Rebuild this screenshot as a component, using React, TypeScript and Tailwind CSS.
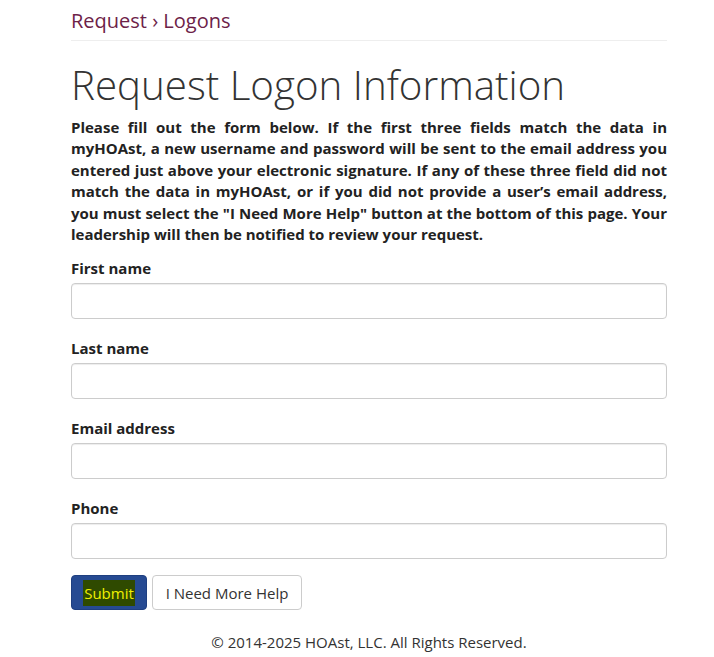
import React from 'react';

const fields = ['First name', 'Last name', 'Email address', 'Phone'];

const App = () => {
  return (
    <div className="min-h-[657px] bg-white text-[#333] font-['Open_Sans',sans-serif]">
      <div className="ml-[71px] w-[596px] pt-[8px]">
        <div className="text-[20px] leading-[26px] text-[#6d2248] pb-[6px] border-b border-[#eee]">
          Request › Logons
        </div>

        <h1 className="mt-[20px] text-[40.3px] leading-[48px] font-light text-[#333]">
          Request Logon Information
        </h1>

        <p className="mt-[8px] text-[15px] leading-[21.4px] font-bold text-[#222] text-justify">
          Please fill out the form below. If the first three fields match the data in myHOAst, a new username and
          password will be sent to the email address you entered just above your electronic signature. If any of
          these three field did not match the data in myHOAst, or if you did not provide a user’s email address, you
          must select the "I Need More Help" button at the bottom of this page. Your leadership will then be notified
          to review your request.
        </p>

        <form className="mt-[13px]" onSubmit={(e) => e.preventDefault()}>
          {fields.map((f) => (
            <div key={f} className="mb-[19px]">
              <label className="block text-[15px] leading-[21px] font-bold text-[#222] mb-[4px]">{f}</label>
              <input
                type="text"
                className="block w-full h-[36px] px-3 border border-[#ccc] rounded-[4px] shadow-[inset_0_1px_1px_rgba(0,0,0,0.075)] outline-none"
              />
            </div>
          ))}

          <div className="-mt-[3px] flex gap-[5px]">
            <button
              type="submit"
              className="h-[35px] w-[76px] rounded-[4px] bg-[#264a92] border border-[#1f3f80] flex items-center justify-center text-[15px]"
            >
              <span className="bg-[#2f4a00] text-[#f0f000] px-[1px] leading-[26px]">Submit</span>
            </button>
            <button
              type="button"
              className="h-[35px] w-[150px] rounded-[4px] bg-white border border-[#ccc] text-[15px] text-[#333]"
            >
              I Need More Help
            </button>
          </div>
        </form>

        <div className="mt-[20px] text-center text-[15px] leading-[24px] text-[#333]">
          © 2014-2025 HOAst, LLC. All Rights Reserved.
        </div>
      </div>
    </div>
  );
};

export default App;
